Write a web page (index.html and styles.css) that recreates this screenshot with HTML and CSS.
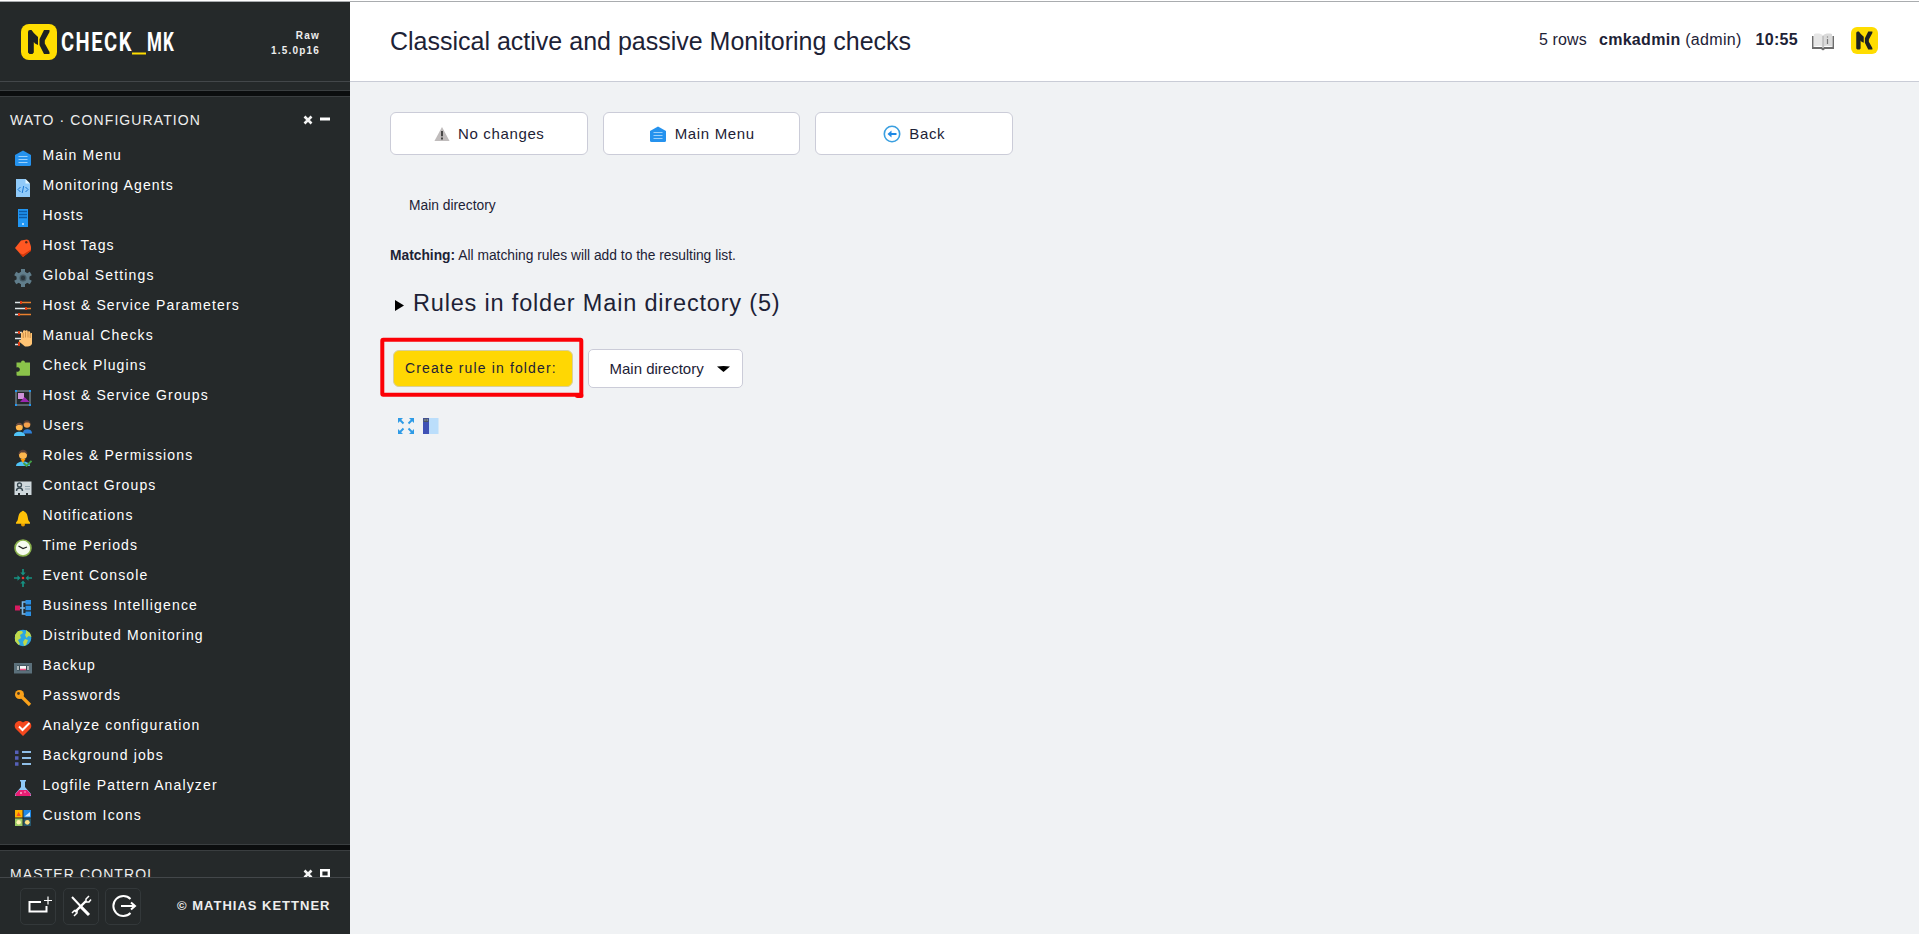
FILE: index.html
```html
<!DOCTYPE html>
<html lang="en">
<head>
<meta charset="utf-8">
<title>Check_MK</title>
<link rel="stylesheet" href="styles.css">
</head>
<body>
<svg class="defs" width="0" height="0">
  <symbol id="mk" viewBox="0 0 36 36">
    <rect width="36" height="36" rx="8" fill="#ffdd00"/>
    <path d="M7 8a2 2 0 0 1 2-2h1.500l2.300 3L17 13v8l-3-1.500-1.200-1.500V28.500L11.500 30H8.500L7 28.500zM23 6h5.500v2L23.800 16.500v3L28.500 28v2H23L18.500 21v-6z" fill="#1d2122"/>
  </symbol>
  <symbol id="house" viewBox="0 0 18 18">
    <path d="M9 1.500L17 6v9.500a1.500 1.500 0 0 1-1.500 1.500h-13A1.500 1.500 0 0 1 1 15.500V6z" fill="#2592ee"/>
    <path d="M4.500 7.500h9M4.500 10.500h9M4.500 13.500h9" stroke="#9bd0fb" stroke-width="1.200"/>
  </symbol>
</svg>
<div class="page">
  <aside class="sidebar">
    <header class="brand">
      <svg class="brand-logo" width="158" height="40" viewBox="0 0 158 40">
        <use href="#mk" x="1" y="2" width="36" height="36"/>
        <g class="brand-text">
          <text transform="translate(41 29) scale(.8 1)" textLength="88">CHECK</text>
          <text transform="translate(127 29) scale(.68 1)" textLength="39.500">MK</text>
          <rect x="112" y="30.500" width="14" height="2" fill="#ffdd00"/>
        </g>
      </svg>
      <div class="version">Raw<br>1.5.0p16</div>
    </header>
    <div class="snapins">
      <div class="divider"></div>
      <div class="snapin-head"><span>WATO · CONFIGURATION</span>
        <svg width="28" height="12" viewBox="0 0 28 12"><path d="M1.500 2.500l7 7M8.500 2.500l-7 7" stroke="#f4f4f4" stroke-width="2.600"/><path d="M17 5h10" stroke="#fff" stroke-width="3"/></svg>
      </div>
      <ul class="menu">
        <li><svg viewBox="0 0 18 18"><use href="#house"/></svg>Main Menu</li>
        <li><svg viewBox="0 0 18 18"><path d="M2 0h9.500L16 4.500V18H2z" fill="#90caf9"/><path d="M11.500 0v4.500H16z" fill="#e1f5fe"/><path d="M6.500 8L4 10.500 6.500 13M11.500 8l2.500 2.500-2.500 2.500M9.700 7l-1.500 7" fill="none" stroke="#1976d2"/></svg>Monitoring Agents</li>
        <li><svg viewBox="0 0 18 18"><path d="M4 0h10v18H4z" fill="#2196f3"/><path d="M5 2.500h8M5 5.500h8M5 8.500h8" stroke="#0d5ca8" stroke-width="1.300"/><path d="M8 15h2" stroke="#cfe8ff" stroke-width="1.500"/></svg>Hosts</li>
        <li><svg viewBox="0 0 18 18"><path d="M7 1.500L13 .5l2 1 2 6v4L9 18 1 9z" fill="#ff5722"/><path d="M17 10.500v1.500L9 18l-3.500-4L9 15.500z" fill="#d3370b"/><circle cx="12.300" cy="3.300" r="1.200" fill="#5d2613"/></svg>Host Tags</li>
        <li><svg viewBox="0 0 18 18"><path d="M9 0v18M1.200 4.500l15.600 9M1.200 13.500l15.600-9" stroke="#607d8b" stroke-width="4"/><circle cx="9" cy="9" r="5" fill="#455a64" stroke="#607d8b" stroke-width="3"/><circle cx="9" cy="9" r="2.200" fill="#2c383e"/></svg>Global Settings</li>
        <li><svg viewBox="0 0 18 18"><path d="M1 3.500h7M1 9.500h11M1 15.500h4" stroke="#dfe5e8" stroke-width="1.500"/><path d="M8 3.500h9M12 9.500h5M5 15.500h12" stroke="#e8802e" stroke-width="1.500"/><path d="M7 2v3M12 8v3M5 14v3" stroke="#dd3a12" stroke-width="2"/></svg>Host &amp; Service Parameters</li>
        <li><svg viewBox="0 0 18 18"><path d="M1 3.500h7M1 9.500h7M1 15.500h4" stroke="#dfe5e8" stroke-width="1.500"/><path d="M5 2v3M5 13v4" stroke="#dd3a12" stroke-width="2"/><path d="M7 4.500a1 1 0 0 1 2-.5V2.500a1.200 1.200 0 0 1 2.400 0 1.200 1.200 0 0 1 2.400 0v1a1.200 1.200 0 0 1 2.400 0V5a1 1 0 0 1 2.200 0v8a5 5 0 0 1-5 4.500H11L5 12.500a1.300 1.300 0 0 1 2-1.500z" fill="#ffc474"/><path d="M9.200 4v5M11.500 3v5.500M14 3v5.500M16.200 4v5" stroke="#b87b36" stroke-width=".7"/></svg>Manual Checks</li>
        <li><svg viewBox="0 0 18 18"><path d="M2.500 3.500h4.500a2 2 0 1 1 4 0H16V16a.8.8 0 0 1-.8.800H3.500a1 1 0 0 1-1-1V12.500c4.500 1.500 4.500-5.500 0-4z" fill="#8bc34a"/></svg>Check Plugins</li>
        <li><svg viewBox="0 0 18 18"><path d="M2 2h14v14H2z" fill="none" stroke="#8fa3ad"/><path d="M4 4h6v6H4z" fill="#ce93d8"/><path d="M6 13l4.500-5 5 5z" fill="#9c27b0"/><path d="M1 1h2v2H1zM15 1h2v2h-2zM1 15h2v2H1zM15 15h2v2h-2z" fill="#2196f3"/></svg>Host &amp; Service Groups</li>
        <li><svg viewBox="0 0 18 18"><path d="M9 13.500c0-4.500 8.500-4.500 9 0v1H9z" fill="#2f80d8"/><circle cx="13" cy="5.500" r="3.300" fill="#f5a04c"/><path d="M9.500 5c0-5 7-5 7 0l-2-1.500h-3z" fill="#5d4037"/><path d="M0 16.500c0-5 10.500-5 11 0v.5H0z" fill="#4fc3f7"/><circle cx="5.300" cy="8" r="3.500" fill="#ffb74d"/><path d="M1.800 7.500c0-5 7-5 7 0L7 6H4z" fill="#6d4c41"/></svg>Users</li>
        <li><svg viewBox="0 0 18 18"><path d="M2 17c0-6 14-6 14 0z" fill="#4fc3f7"/><path d="M6.500 10h5L9 14z" fill="#ff9800"/><circle cx="9" cy="6" r="4" fill="#ffb74d"/><path d="M4.500 6c-.5-7 9.500-7 9 0L11 3.500H7z" fill="#5d4037"/><path d="M9.500 14l3 2.800 5-5" fill="none" stroke="#43a047" stroke-width="1.900"/></svg>Roles &amp; Permissions</li>
        <li><svg viewBox="0 0 18 18"><path d="M.5 2.500h17V16H14v-2h-2v2H6v-2H4v2H.5z" fill="#cfd8dc"/><circle cx="5.500" cy="6" r="2" fill="none" stroke="#37474f" stroke-width="1.300"/><path d="M2.500 12c0-4 6-4 6 0" fill="none" stroke="#37474f" stroke-width="1.400"/><path d="M11 7.500h5M11 10h5" stroke="#90a4ae"/></svg>Contact Groups</li>
        <li><svg viewBox="0 0 18 18"><circle cx="9" cy="15.500" r="2" fill="#e89b00"/><path d="M7.800 2.500a1.300 1.300 0 0 1 2.400 0C14 4 13.500 9 14.500 11.500L16 13.500v1.200H2v-1.200l1.500-2C4.500 9 4 4 7.800 2.500z" fill="#ffc107"/></svg>Notifications</li>
        <li><svg viewBox="0 0 18 18"><circle cx="9" cy="9" r="8" fill="#f6fbf0" stroke="#8ab14c" stroke-width="1.600"/><path d="M4.500 7L9 9.500l4-1.500" fill="none" stroke="#222" stroke-width="1.200"/></svg>Time Periods</li>
        <li><svg viewBox="0 0 18 18"><path d="M9 0v4M9 14v4M0 9h4M14 9h4" stroke="#169182" stroke-width="1.700"/><path d="M6.300 3.500h5.400L9 6.500zM6.300 14.500h5.400L9 11.500zM3.500 6.300v5.400L6.500 9zM14.500 6.300v5.400L11.500 9z" fill="#169182"/><circle cx="9" cy="9" r="1.300" fill="#e53935"/></svg>Event Console</li>
        <li><svg viewBox="0 0 18 18"><path d="M6 9h5M12 3H8.500v12H12" fill="none" stroke="#78b9eb" stroke-width="1.600"/><path d="M1 6.500h5v5H1z" fill="#d81b60"/><path d="M11.500 1H17v4.500h-5.500zM11.500 6.800H17v4.500h-5.500zM11.500 12.500H17V17h-5.500z" fill="#2b90e5"/></svg>Business Intelligence</li>
        <li><svg viewBox="0 0 18 18"><circle cx="9" cy="9" r="8.300" fill="#2ca5e2"/><path d="M1 6l3-4h4l1 2-3 2 1 3-3 2 2 4-1.500 1L1 12zM12 1l4 3 1.500 4-3-1-2 2-1.500-3 1-2zM11 10l3 1-2 5-2 1-1-4z" fill="#bfd94b"/></svg>Distributed Monitoring</li>
        <li><svg viewBox="0 0 18 18"><path d="M0 4h18v10.500H0z" fill="#5b707b"/><path d="M3 6.500h12v5H3z" fill="#37474f"/><path d="M4 7v4M14 7v4" stroke="#e3e8ea" stroke-width="1.400"/><path d="M6 7h6v4H6z" fill="#f8f8f8"/><path d="M6 10.500h6" stroke="#ef5384" stroke-width="1.500"/></svg>Backup</li>
        <li><svg viewBox="0 0 18 18"><path d="M7 7l9 9" stroke="#f9a11a" stroke-width="3.200"/><circle cx="5.500" cy="5.500" r="4.500" fill="#f9a11a"/><circle cx="4.500" cy="4.500" r="1.400" fill="#4d3d27"/></svg>Passwords</li>
        <li><svg viewBox="0 0 18 18"><path d="M9 17L1.500 9.500C-1.500 5 4.500-1 9 3.500 13.500-1 19.500 5 16.500 9.500z" fill="#f4481e"/><path d="M5 7.500l3.500 3.500L15.500 4" fill="none" stroke="#fff" stroke-width="2"/></svg>Analyze configuration</li>
        <li><svg viewBox="0 0 18 18"><path d="M1 1.500h3.500v3.500H1zM1 7.300h3.500v3.500H1zM1 13.200h3.500v3.500H1z" fill="#5560b8"/><path d="M8 3h9M8 9h9M8 15h9" stroke="#90bfe8" stroke-width="1.800"/></svg>Background jobs</li>
        <li><svg viewBox="0 0 18 18"><path d="M6 1h6v1.500h-1V8l6 7v2H1v-2l6-7V2.500H6z" fill="#90caf9"/><path d="M5 11h8l4 4.500-1 1.500H2l-1-1.500z" fill="#e91e73"/><circle cx="7" cy="14" r="1" fill="#ffb0cf"/><circle cx="11" cy="13" r=".8" fill="#ffb0cf"/></svg>Logfile Pattern Analyzer</li>
        <li><svg viewBox="0 0 18 18"><path d="M1 1h7.500v7.500H1z" fill="#ffb300"/><path d="M2.500 7l2-4 2.500 4z" fill="#f4511e"/><path d="M9.500 1H17v7.500H9.500z" fill="#1e88e5"/><path d="M10.500 7.500L16 3v4.500z" fill="#c9e7ff"/><path d="M1 9.500h7.500V17H1z" fill="#9ccc65"/><circle cx="4.700" cy="13.300" r="2.200" fill="#fff3b0"/><path d="M9.500 9.500H17V17H9.500z" fill="#26566d"/><circle cx="13.300" cy="13.300" r="2.400" fill="#ffe082"/></svg>Custom Icons</li>
      </ul>
      <div class="divider"></div>
      <div class="snapin-head"><span>MASTER CONTROL</span>
        <svg width="28" height="12" viewBox="0 0 28 12"><path d="M1.500 2.500l7 7M8.500 2.500l-7 7" stroke="#f4f4f4" stroke-width="2.600"/><path d="M18.200 2.200h7.600v6.600h-7.600z" fill="none" stroke="#fff" stroke-width="2.400"/></svg>
      </div>
    </div>
    <footer class="side-foot">
      <div class="foot-btn"><svg width="36" height="36" viewBox="0 0 36 36"><path d="M21 14H9.500v9.500h17V18" fill="none" stroke="#fff" stroke-width="2"/><path d="M24 12.500h8M28 8.500v8" stroke="#fff" stroke-width="1.200"/></svg></div>
      <div class="foot-btn"><svg width="36" height="36" viewBox="0 0 36 36"><path d="M9 9l16 17" stroke="#fff" stroke-width="2"/><path d="M17 18l9 9" stroke="#fff" stroke-width="3"/><path d="M23 13L12 24" stroke="#fff" stroke-width="2.400"/><path d="M26 8l-3 3v3h3l2-2.500M9 25l2.500-2.500h2.500V25l-3 3" fill="none" stroke="#fff" stroke-width="1.500"/></svg></div>
      <div class="foot-btn"><svg width="36" height="36" viewBox="0 0 36 36"><path d="M25.500 11a10 10 0 1 0 0 14" fill="none" stroke="#fff" stroke-width="2"/><path d="M16 18h13M26 14.500l4 3.500-4 3.500" fill="none" stroke="#fff" stroke-width="2"/></svg></div>
      <span class="copyright">© MATHIAS KETTNER</span>
    </footer>
  </aside>
  <main class="main">
    <header class="topbar">
      <h1>Classical active and passive Monitoring checks</h1>
      <div class="status">
        <span class="rows">5 rows</span>
        <span class="user"><b>cmkadmin</b> (admin)</span>
        <b class="clock">10:55</b>
        <svg class="book" width="22" height="18" viewBox="0 0 22 18"><path d="M0 3h1.500v11H10l1 1 1-1h8.500V3H22v13H13l-2 1.500L9 16H0z" fill="#6d6d6d"/><path d="M2 1c4-1 7-.5 9 1.500V14c-2-1.500-5-1.500-9-.5z" fill="#e6e6e6"/><path d="M20 1c-4-1-7-.5-9 1.500V14c2-1.500 5-1.500 9-.5z" fill="#dadada"/><path d="M11 3v11" stroke="#aaa"/><path d="M15.500 3.500v1M15.500 6v5" stroke="#777" stroke-width="1.200"/></svg>
        <svg class="mini" width="27" height="27"><use href="#mk" width="27" height="27"/></svg>
      </div>
    </header>
    <section class="content">
      <nav class="buttons">
        <a><svg width="16" height="16" viewBox="0 0 18 18"><path d="M9 1l8.500 16H.5z" fill="#c0bcbc"/><path d="M9 5.500v6M9 13v2.200" stroke="#2b2b2b" stroke-width="1.800"/></svg>No changes</a>
        <a><svg width="18" height="18"><use href="#house"/></svg>Main Menu</a>
        <a><svg width="18" height="18" viewBox="0 0 18 18"><circle cx="9" cy="9" r="7.700" fill="#fff" stroke="#3a9fe0" stroke-width="1.600"/><path d="M13.500 9H7" stroke="#1e88e5" stroke-width="2"/><path d="M8.500 5.500v7L4.500 9z" fill="#1e88e5"/></svg>Back</a>
      </nav>
      <p class="crumb">Main directory</p>
      <p class="match"><b>Matching:</b> All matching rules will add to the resulting list.</p>
      <h2><svg width="9" height="11" viewBox="0 0 9 11"><path d="M0 0l9 5.500L0 11z"/></svg>Rules in folder Main directory (5)</h2>
      <div class="form">
        <div class="create">Create rule in folder:
          <svg class="mark" width="204" height="62" viewBox="0 0 204 62"><rect x="2.300" y="2.700" width="199" height="55" rx="1" fill="none" stroke="#fc0006" stroke-width="4"/><path d="M197.500 58.500h3.500" stroke="#fc0006" stroke-width="5" stroke-linecap="round"/></svg>
        </div>
        <div class="select">Main directory<svg width="13" height="6" viewBox="0 0 13 6"><path d="M0 .5Q6.500-.5 13 .5L6.500 6z"/></svg></div>
      </div>
      <div class="tools">
        <svg width="16" height="16" viewBox="0 0 16 16"><path d="M1.500 1.500l4 4M14.500 1.500l-4 4M1.500 14.500l4-4M14.500 14.500l-4-4" stroke="#2e9be6" stroke-width="1.900"/><path d="M0 0h5L0 5zM16 0h-5l5 5zM0 16h5L0 11zM16 16h-5l5-5z" fill="#2e9be6"/></svg>
        <svg width="16" height="16" viewBox="0 0 16 16"><path d="M0 0h6v16H0z" fill="#3f51b5"/><path d="M6 0h9.500v16H6z" fill="#bbdefb"/><path d="M.5.500h5V4h-5z" fill="#4a5560"/><path d="M1.500 2h1M3.700 2h1" stroke="#dde"/></svg>
      </div>
    </section>
  </main>
</div>
</body>
</html>
```
FILE: styles.css
```css
* { box-sizing: border-box; }
body { margin: 0; font-family: "Liberation Sans", Arial, sans-serif; color: #1d2236; background: #fff; }
.defs { position: absolute; }
.page { display: flex; height: 934px; padding-top: 1px; overflow: hidden; }
.sidebar { width: 350px; flex: none; display: flex; flex-direction: column; background: #25292a; border-top: 1px solid #a9acaf; color: #fff; }
.brand { height: 80px; flex: none; display: flex; justify-content: space-between; border-bottom: 1px solid #43474a; padding: 20px 30px 0 20px; }
.brand-logo { overflow: visible; }
.brand-text { font: bold 25px Roboto, sans-serif; fill: #fff; }
.version { font-size: 10px; font-weight: bold; line-height: 15px; text-align: right; letter-spacing: 1.200px; padding-top: 6px; color: #eee; }
.snapins { flex: 1; min-height: 0; overflow: hidden; padding-top: 8px; }
.divider { height: 7px; background: #0b0d0e; border-top: 1px solid #3a3e40; border-bottom: 1px solid #3a3e40; }
.snapin-head { display: flex; align-items: center; justify-content: space-between; height: 43px; padding: 2px 19px 0 10px; font-size: 14px; letter-spacing: 1.100px; color: #eee; }
.menu { list-style: none; margin: 0; padding: 0 0 14px; }
.menu li { display: flex; align-items: center; gap: 10.500px; height: 30px; padding-left: 14px; font-size: 14px; letter-spacing: 1.140px; }
.menu svg { width: 18px; height: 18px; flex: none; margin-top: 6px; }
.side-foot { height: 57px; flex: none; display: flex; align-items: flex-start; border-top: 1px solid #43474a; padding: 10px 0 0 20px; gap: 6.500px; }
.foot-btn { width: 36px; height: 37px; border: 1px solid #33383a; border-radius: 5px; }
.foot-btn svg { display: block; margin: -1px; }
.copyright { margin-left: 29.500px; font-size: 13px; font-weight: bold; letter-spacing: 1px; line-height: 36px; color: #eee; }
.main { flex: 1; display: flex; flex-direction: column; background: #f0f2f4; border-top: 1px solid #a9acaf; }
.topbar { height: 80px; display: flex; justify-content: space-between; background: #fff; border-bottom: 1px solid #c9ccd6; padding: 0 41px 0 40px; }
h1 { margin: 0; font-weight: normal; font-size: 25px; line-height: 79px; }
.status { display: flex; font-size: 16px; line-height: 76px; white-space: nowrap; }
.rows { letter-spacing: .15px; }
.user { margin-left: 12px; letter-spacing: .3px; }
.clock { margin-left: 14px; letter-spacing: .3px; }
.book { margin: 31px 0 0 14px; }
.mini { margin: 25px 0 0 17px; }
.content { padding: 30px 0 0 40px; }
.buttons { display: flex; gap: 15px; }
.buttons a { width: 197.500px; height: 43px; display: flex; align-items: center; justify-content: center; gap: 8px; background: #fff; border: 1px solid #cbccd8; border-radius: 6px; font-size: 15px; letter-spacing: .65px; padding-left: 1px; }
p { margin: 0; font-size: 13.800px; line-height: 20px; }
.crumb { padding: 41px 0 0 19px; }
.match { padding-top: 30px; }
h2 { display: flex; align-items: center; gap: 9px; margin: 19px 0 0 5px; font-weight: normal; font-size: 23.500px; line-height: 36px; letter-spacing: .82px; }
h2 svg { margin-top: 5px; }
.form { display: flex; align-items: center; gap: 15px; margin: 28px 0 0 3px; }
.create { position: relative; width: 180px; height: 37px; background: #ffd703; border: 1px solid #d8cf9a; border-radius: 6px; padding-left: 11px; font-size: 14px; line-height: 35px; letter-spacing: 1.130px; }
.mark { position: absolute; left: -14px; top: -14px; }
.select { display: flex; align-items: center; width: 155px; height: 39px; background: #fff; border: 1px solid #cbccd8; border-radius: 5px; padding-left: 20.500px; gap: 13px; font-size: 15px; }
.tools { display: flex; gap: 9px; margin: 30px 0 0 8px; }
```
